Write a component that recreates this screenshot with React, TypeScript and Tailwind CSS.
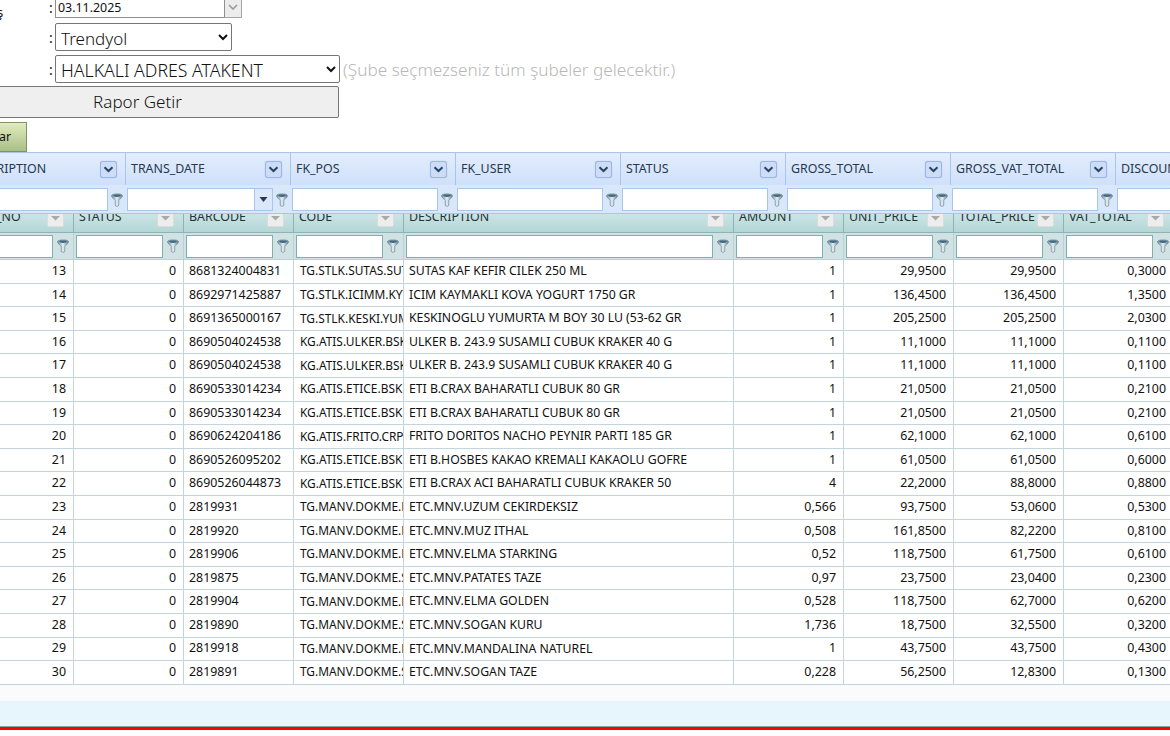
import React from 'react';

const upperCols = ['DESCRIPTION', 'TRANS_DATE', 'FK_POS', 'FK_USER', 'STATUS', 'GROSS_TOTAL', 'GROSS_VAT_TOTAL', 'DISCOUNT_TOTAL'];

const lowerCols = [
  { name: 'LINE_NO', width: 'w-[110px]' },
  { name: 'STATUS', width: 'w-[110px]' },
  { name: 'BARCODE', width: 'w-[110px]' },
  { name: 'CODE', width: 'w-[110px]' },
  { name: 'DESCRIPTION', width: 'w-[330px]' },
  { name: 'AMOUNT', width: 'w-[110px]' },
  { name: 'UNIT_PRICE', width: 'w-[110px]' },
  { name: 'TOTAL_PRICE', width: 'w-[110px]' },
  { name: 'VAT_TOTAL', width: 'w-[110px]' },
];

const rows = [
  ['13', '8681324004831', 'TG.STLK.SUTAS.SUT', 'SUTAS KAF KEFIR CILEK 250 ML', '1', '29,9500', '29,9500', '0,3000'],
  ['14', '8692971425887', 'TG.STLK.ICIMM.KYT', 'ICIM KAYMAKLI KOVA YOGURT 1750 GR', '1', '136,4500', '136,4500', '1,3500'],
  ['15', '8691365000167', 'TG.STLK.KESKI.YUM', 'KESKINOGLU YUMURTA M BOY 30 LU (53-62 GR', '1', '205,2500', '205,2500', '2,0300'],
  ['16', '8690504024538', 'KG.ATIS.ULKER.BSK', 'ULKER B. 243.9 SUSAMLI CUBUK KRAKER 40 G', '1', '11,1000', '11,1000', '0,1100'],
  ['17', '8690504024538', 'KG.ATIS.ULKER.BSK', 'ULKER B. 243.9 SUSAMLI CUBUK KRAKER 40 G', '1', '11,1000', '11,1000', '0,1100'],
  ['18', '8690533014234', 'KG.ATIS.ETICE.BSK', 'ETI B.CRAX BAHARATLI CUBUK 80 GR', '1', '21,0500', '21,0500', '0,2100'],
  ['19', '8690533014234', 'KG.ATIS.ETICE.BSK', 'ETI B.CRAX BAHARATLI CUBUK 80 GR', '1', '21,0500', '21,0500', '0,2100'],
  ['20', '8690624204186', 'KG.ATIS.FRITO.CRP', 'FRITO DORITOS NACHO PEYNIR PARTI 185 GR', '1', '62,1000', '62,1000', '0,6100'],
  ['21', '8690526095202', 'KG.ATIS.ETICE.BSK', 'ETI B.HOSBES KAKAO KREMALI KAKAOLU GOFRE', '1', '61,0500', '61,0500', '0,6000'],
  ['22', '8690526044873', 'KG.ATIS.ETICE.BSK', 'ETI B.CRAX ACI BAHARATLI CUBUK KRAKER 50', '4', '22,2000', '88,8000', '0,8800'],
  ['23', '2819931', 'TG.MANV.DOKME.MEY', 'ETC.MNV.UZUM CEKIRDEKSIZ', '0,566', '93,7500', '53,0600', '0,5300'],
  ['24', '2819920', 'TG.MANV.DOKME.MEY', 'ETC.MNV.MUZ ITHAL', '0,508', '161,8500', '82,2200', '0,8100'],
  ['25', '2819906', 'TG.MANV.DOKME.MEY', 'ETC.MNV.ELMA STARKING', '0,52', '118,7500', '61,7500', '0,6100'],
  ['26', '2819875', 'TG.MANV.DOKME.SEB', 'ETC.MNV.PATATES TAZE', '0,97', '23,7500', '23,0400', '0,2300'],
  ['27', '2819904', 'TG.MANV.DOKME.MEY', 'ETC.MNV.ELMA GOLDEN', '0,528', '118,7500', '62,7000', '0,6200'],
  ['28', '2819890', 'TG.MANV.DOKME.SEB', 'ETC.MNV.SOGAN KURU', '1,736', '18,7500', '32,5500', '0,3200'],
  ['29', '2819918', 'TG.MANV.DOKME.MEY', 'ETC.MNV.MANDALINA NATUREL', '1', '43,7500', '43,7500', '0,4300'],
  ['30', '2819891', 'TG.MANV.DOKME.SEB', 'ETC.MNV.SOGAN TAZE', '0,228', '56,2500', '12,8300', '0,1300'],
];

function Funnel() {
  return (
    <svg width="12" height="14" viewBox="0 0 12 14" className="shrink-0">
      <defs>
        <linearGradient id="funnelFill" x1="0" y1="0" x2="1" y2="0">
          <stop offset="0" stopColor="#6f8a9c" />
          <stop offset="0.5" stopColor="#e6eef2" />
          <stop offset="1" stopColor="#5f7a8c" />
        </linearGradient>
      </defs>
      <path d="M0.5 2.8 C0.5 0.2 11.5 0.2 11.5 2.8 C11.5 5 8.2 6 7.8 7.5 L7.8 12 C7.8 13.8 4.2 13.8 4.2 12 L4.2 7.5 C3.8 6 0.5 5 0.5 2.8 Z" fill="url(#funnelFill)" stroke="#6a8494" strokeWidth="0.6" />
      <ellipse cx="6" cy="2.6" rx="3.8" ry="1.3" fill="#3f6a82" />
    </svg>
  );
}

function BlueMenuButton() {
  return (
    <span className="flex h-[17px] w-[17px] shrink-0 items-center justify-center rounded-[3px] border border-[#9db5ea] bg-[#cfdcf6] shadow-[0_0_1px_#8fa8e0]">
      <svg width="11" height="7" viewBox="0 0 11 7">
        <path d="M1.5 1.2 L5.5 5 L9.5 1.2" fill="none" stroke="#24456e" strokeWidth="2" />
      </svg>
    </span>
  );
}

function GrayMenuButton() {
  return (
    <span className="flex h-[17px] w-[17px] shrink-0 items-center justify-center rounded-[2px] border border-[#dcdcdc] bg-[#ededed]">
      <svg width="11" height="7" viewBox="0 0 11 7">
        <path d="M1 1 H10 L5.5 5.5 Z" fill="#a9a9a9" />
      </svg>
    </span>
  );
}

export default function App() {
  return (
    <div className="h-[736px] w-[1170px] overflow-hidden bg-white text-[#111] font-['Noto_Sans','DejaVu_Sans',sans-serif]">
      {/* rapor formu, sayfa yukari ve saga kaymis */}
      <div className="-mt-[4px] h-[126px] pl-[49px] relative">
        <span className="absolute left-[-3px] top-[7px] text-[13px]">ş</span>
        <div className="flex h-[22px] items-center">
          <span className="w-[6px] text-[14px]">:</span>
          <input
            readOnly
            value="03.11.2025"
            className="h-[22px] w-[170px] border border-[#8f8f8f] bg-white px-[2px] text-[12.4px] text-[#111] outline-none"
          />
          <span className="flex h-[22px] w-[17px] items-center justify-center border border-l-0 border-[#a5a5a5] bg-[#ececec]">
            <svg width="10" height="6" viewBox="0 0 10 6">
              <path d="M1 1 L5 5 L9 1" fill="none" stroke="#9a9a9a" strokeWidth="1.6" />
            </svg>
          </span>
        </div>
        <div className="mt-[5px] flex h-[28px] items-center">
          <span className="w-[6px] text-[14px]">:</span>
          <select defaultValue="Trendyol" className="h-[28px] w-[177px] rounded-[2px] border border-[#767676] bg-white px-[1px] pt-[2px] text-[17px] font-light text-[#111]">
            <option>Trendyol</option>
          </select>
        </div>
        <div className="mt-[4px] flex h-[28px] items-center">
          <span className="w-[6px] text-[14px]">:</span>
          <select defaultValue="HALKALI ADRES ATAKENT" className="h-[28px] w-[285px] rounded-[2px] border border-[#767676] bg-white px-[1px] pt-[1px] text-[17.7px] font-light text-[#111]">
            <option>HALKALI ADRES ATAKENT</option>
          </select>
          <span className="ml-[3px] whitespace-nowrap pt-[1px] text-[17.2px] font-light text-[#b8b8b8]">(Şube seçmezseniz tüm şubeler gelecektir.)</span>
        </div>
        <div className="-ml-[115px] mt-[3px] w-[405px]">
          <button className="h-[32px] w-full rounded-[2px] border border-[#767676] bg-[#efefef] pl-[2px] text-center text-[17px] font-light text-[#111]">
            Rapor Getir
          </button>
        </div>
      </div>

      <button className="-ml-[30px] block h-[30px] w-[57px] border border-[#7d9660] bg-gradient-to-b from-[#e2ebbd] to-[#a9c088] pr-[6px] text-center text-[12.4px] text-[#111]">
        Aktar
      </button>

      <div className="relative z-10 h-[62px] w-[1170px] overflow-hidden border-y border-[#a9c6ea] bg-[#d9e7fb]">
        <div className="-ml-[39px] flex h-[33px] w-[1400px] border-b border-[#d9e7fb] bg-gradient-to-b from-[#e3eefd] to-[#cfe0fa]">
          {upperCols.map((col) => (
            <div key={col} className="flex w-[165px] shrink-0 items-center justify-between border-r border-[#a9c6ea] pl-[5px] pr-[8px] text-[12.4px] text-[#25384f]">
              <span className="whitespace-nowrap pt-[1px]">{col}</span>
              <BlueMenuButton />
            </div>
          ))}
        </div>
        <div className="-ml-[40px] flex h-[27px] w-[1400px] items-center">
          {upperCols.map((col) => (
            <div key={col} className="flex w-[165px] shrink-0 items-center gap-[3px] pl-[2px] pr-[2px]">
              {col === 'TRANS_DATE' ? (
                <div className="flex h-[23px] w-[146px] border border-[#a9c6ea] bg-white">
                  <input readOnly className="h-full min-w-0 flex-1 bg-white outline-none" />
                  <span className="flex w-[18px] items-center justify-center border-l border-[#a9c6ea] bg-[#dbe7fa]">
                    <svg width="9" height="5" viewBox="0 0 9 5">
                      <path d="M0.5 0 H8.5 L4.5 5 Z" fill="#1f3a5f" />
                    </svg>
                  </span>
                </div>
              ) : (
                <input readOnly className="h-[23px] w-[146px] border border-[#a9c6ea] bg-white outline-none" />
              )}
              <Funnel />
            </div>
          ))}
        </div>
      </div>

      {/* alt grid, ust grid basligin ustune biniyor */}
      <div className="-mt-[9px] w-[1170px] overflow-hidden">
        <div className="-ml-[36px] w-[1300px]">
          <div className="flex h-[28px] border-b border-[#8fb3b3] bg-gradient-to-b from-[#d6ecec] to-[#b4d6d6]">
            {lowerCols.map((col) => (
              <div key={col.name} className={`${col.width} flex shrink-0 items-center justify-between border-r border-[#8fb3b3] pl-[5px] pr-[9px] text-[12.4px] text-[#233]`}>
                <span className="-mt-[2px] whitespace-nowrap">{col.name}</span>
                <GrayMenuButton />
              </div>
            ))}
          </div>
          <div className="flex h-[27px] items-center border-b border-[#bcd0d8] bg-[#d1e2e4]">
            {lowerCols.map((col) => (
              <div key={col.name} className={`${col.width} flex h-full shrink-0 items-center gap-[4px] border-r border-[#bcd0d8] pl-[2px] pr-[4px]`}>
                <input readOnly className="h-[23px] min-w-0 flex-1 border border-[#7fb0b0] bg-white outline-none" />
                <Funnel />
              </div>
            ))}
          </div>
          {rows.map((row) => (
            <div key={row[0]} className="flex h-[23.6px] items-center border-b border-[#c2d4de] bg-white text-[12.4px] text-[#111]">
              <div className="flex h-full w-[110px] shrink-0 items-center justify-end border-r border-[#c2d4de] pr-[7px]">{row[0]}</div>
              <div className="flex h-full w-[110px] shrink-0 items-center justify-end border-r border-[#c2d4de] pr-[7px]">0</div>
              <div className="flex h-full w-[110px] shrink-0 items-center overflow-hidden whitespace-nowrap border-r border-[#c2d4de] pl-[5px]">{row[1]}</div>
              <div className="flex h-full w-[110px] shrink-0 items-center overflow-hidden whitespace-nowrap border-r border-[#c2d4de] pl-[6px] text-[11.9px]">{row[2]}</div>
              <div className="flex h-full w-[330px] shrink-0 items-center overflow-hidden whitespace-nowrap border-r border-[#c2d4de] pl-[5px] text-[12.25px]">{row[3]}</div>
              <div className="flex h-full w-[110px] shrink-0 items-center justify-end border-r border-[#c2d4de] pr-[7px]">{row[4]}</div>
              <div className="flex h-full w-[110px] shrink-0 items-center justify-end border-r border-[#c2d4de] pr-[7px]">{row[5]}</div>
              <div className="flex h-full w-[110px] shrink-0 items-center justify-end border-r border-[#c2d4de] pr-[7px]">{row[6]}</div>
              <div className="flex h-full w-[110px] shrink-0 items-center justify-end border-r border-[#c2d4de] pr-[7px]">{row[7]}</div>
            </div>
          ))}
        </div>
      </div>

      <div className="h-[16px] bg-[#fbfbfb]" />
      <div className="h-[25px] bg-[#e6f6fc]" />
      <div className="h-[1px] bg-[#7fa8a0]" />
      <div className="h-[3px] bg-[#ff0000]" />
    </div>
  );
}
